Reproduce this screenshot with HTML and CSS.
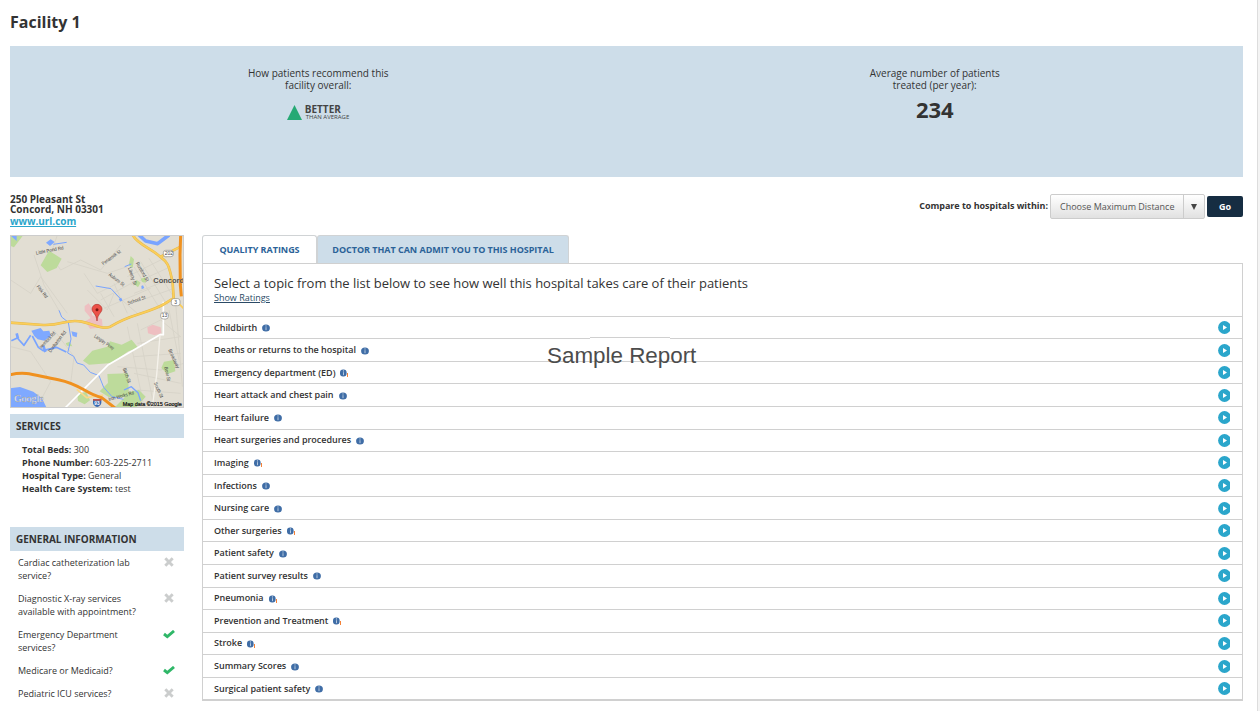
FILE: index.html
```
<!DOCTYPE html>
<html lang="en">
<head>
<meta charset="utf-8">
<title>Facility 1</title>
<link rel="stylesheet" href="styles.css">
</head>
<body>
<svg class="defs" width="0" height="0">
  <symbol id="info" viewBox="0 0 9 8"><ellipse cx="4" cy="4" rx="3.900" ry="3.600" fill="#3f6da6"/><path d="M4 3.200v3" stroke="#b5c8de" stroke-width="1"/><circle cx="4" cy="1.900" r=".6" fill="#c5d4e6"/></symbol>
  <symbol id="info-flag" viewBox="0 0 9 8"><rect x="0" y=".4" width="6.600" height="7.200" rx="3" fill="#3f6da6"/><path d="M3.500 3.200v3" stroke="#b5c8de" stroke-width="1"/><circle cx="3.500" cy="1.900" r=".6" fill="#c5d4e6"/><path d="M7.500 4v4" stroke="#f58238" stroke-width="1"/></symbol>
  <symbol id="go" viewBox="0 0 12 13"><circle cx="6.5" cy="6.5" r="6.4" fill="#2ba6cb"/><path d="M5 4v5l4-2.5z" fill="#fff"/></symbol>
  <symbol id="no" viewBox="0 0 10 10"><path d="M1.3 1.3l7.4 7.4M8.7 1.3L1.3 8.7" stroke="#cbcdcd" stroke-width="2.9"/></symbol>
  <symbol id="yes" viewBox="0 0 12 9"><path d="M1 4l3.300 2.600L11 1" stroke="#2fb768" stroke-width="2.900" fill="none"/></symbol>
</svg>
<div class="page">
  <h1 class="title">Facility 1</h1>
  <section class="summary">
    <div class="stat">
      <p class="stat-label">How patients recommend this<br>facility overall:</p>
      <div class="rating">
        <svg width="15" height="15" viewBox="0 0 15 15"><path d="M7.5 0L15 15H0z" fill="#26a974"/></svg>
        <div class="rating-text"><b class="better">BETTER</b><span class="than">THAN AVERAGE</span></div>
      </div>
    </div>
    <div class="stat">
      <p class="stat-label">Average number of patients<br>treated (per year):</p>
      <strong class="count">234</strong>
    </div>
  </section>
  <div class="contact">
    <address class="address">250 Pleasant St<br>Concord, NH 03301<br><a class="url" href="#">www.url.com</a></address>
    <div class="compare">
      <span class="compare-label">Compare to hospitals within:</span>
      <div class="select"><span class="select-text">Choose Maximum Distance</span><span class="select-arrow"><svg width="6" height="6" viewBox="0 0 6 6"><path d="M0 0h6L3 6z" fill="#444"/></svg></span></div>
      <button class="go-btn">Go</button>
    </div>
  </div>
  <div class="columns">
    <aside class="side">
      <svg class="map" width="174" height="173" viewBox="18 15 522 519">
        <rect x="18" y="15" width="522" height="519" fill="#e2ded3"/>
        <g stroke="#d6d2c8" stroke-width="2.500" fill="none">
          <path d="M160 15l-20 60 30 45 60-30 60 30 60-75M20 150l60 40 30-50 80 110M90 75l30 90 50 85M190 95l120 35 60-20M20 350l60 15 60 90-40 75M150 300l60 80-10 80M240 130l40 60 60-30M250 180l60 60 20-50 70 60"/>
          <path d="M390 110l80 130M410 95l80 130M435 85l70 110M370 140l120-60M380 165l120-55M390 190l115-45M400 215l110-40M290 210l110-60M300 235l140-60M330 260l-40-70M370 250l-40-90M410 300l60-30 60 50M400 340l130-20M390 380l140-10M340 410l130 10 70-20M370 290l50 240M400 280l50 250M495 240l30 150M515 220l20 250M390 430l140 30M400 480l130 10"/>
        </g>
        <g fill="#bddb9b">
          <path d="M18 15h40l-28 37-12-5zM135 62l38 24-15 28-28 12-20-20zM380 78l10 10-4 26-12-8zM410 146l14-4 2 16-12-2zM398 150l12 8-8 14-12-10zM265 362l45-12 8-16 35 10 30-15 20 25-30 10-50 35-68 5-18-12zM310 432l62-2 3 70-60 2-28-18 25-25zM480 395l30-5 4 34-24 8-18-18zM185 340l12-5 8 14-16-2zM375 485l30-5 20 20-30 34h-65l30-30zM220 495l26-10 12 26-16 12-20-10z"/>
        </g>
        <path d="M242 228l12-8 8 12 2 24 30 12 2 24-38 4-14-22 16-10-18-22zM430 292l16-8 24 8 2 18-20 6-20-6z" fill="#eebfc1"/>
        <path d="M82 302l28-8 8 10 18-2 5 16-20 14-20-4-10-10zM126 38l14-10 12 8-14 12zM18 475l30-4 40 14 26 20 14 29H18zM18 15h20v18zM202 304l18 4-2 14-12-4zM412 168l5-2 4 8-8 4z" fill="#7fa9ff"/>
        <g fill="none" stroke="#79a4ff" stroke-linejoin="round">
          <path d="M405 15l20 18 36 8 34-26" stroke-width="11"/>
          <path d="M22 332l18-8 20 22 20-30M85 318l18 34 14 10 40-10 30 14" stroke-width="5"/>
          <path d="M165 241l8 20 20 16 8 50-10 42 18 10 10 20 20 6 20 22 26 10 14 35 25 28 34 8M275 168l46 8 30 32M148 43l40-6M362 110l20-8" stroke-width="3"/>
          <path d="M38 310l4 16M118 348l6 18M348 205l4 8" stroke-width="8"/>
          <path d="M360 480l22-10 20 18 8 24" stroke-width="4"/>
        </g>
        <g fill="none" stroke-linejoin="round">
          <path d="M183 534l130-130 155-90h10V215" stroke="#fff" stroke-width="5"/>
          <path d="M468 315l-10 120-14 100" stroke="#f5f2eb" stroke-width="4"/>
          <path d="M218 478l30 25 50-8" stroke="#fbd98a" stroke-width="5"/>
          <path d="M18 278l100 7c60 2 70-20 115-10s60 24 86 15c60-36 80-32 135-55 30-12 35-20 55-30l-3-45c-12-66-20-66-38-80-25-25-65-35-82-65M470 80l60-30" stroke="#e5b94b" stroke-width="8"/>
          <path d="M18 278l100 7c60 2 70-20 115-10s60 24 86 15c60-36 80-32 135-55 30-12 35-20 55-30l-3-45c-12-66-20-66-38-80-25-25-65-35-82-65M470 80l60-30M509 205l31 32" stroke="#fbce5a" stroke-width="5"/>
          <path d="M18 434c55-12 80 5 145 15 70 14 80 42 130 54l40 31M530 15l-2 60 1 90 3 34" stroke="#f0911f" stroke-width="9"/>
        </g>
        <g fill="#fff" stroke="#8b8b88" stroke-width="2"><rect x="478" y="61" width="30" height="19" rx="7"/><rect x="502" y="206" width="26" height="21" rx="7"/><rect x="470" y="247" width="23" height="20" rx="8"/></g>
        <g class="map-road">
          <text x="482" y="76">202</text><text x="511" y="222">3</text><text x="473" y="262">13</text>
          <text transform="translate(97 74) rotate(-11)" textLength="84" lengthAdjust="spacingAndGlyphs">Little Pond Rd</text>
          <text transform="translate(298 106) rotate(-36)" textLength="66" lengthAdjust="spacingAndGlyphs">Penacook St</text>
          <text transform="translate(313 136) rotate(37)" textLength="55" lengthAdjust="spacingAndGlyphs">Auburn St</text>
          <text transform="translate(372 114) rotate(72)" textLength="55" lengthAdjust="spacingAndGlyphs">Liberty St</text>
          <text transform="translate(395 100) rotate(60)" textLength="64" lengthAdjust="spacingAndGlyphs">Rumford St</text>
          <text transform="translate(373 224) rotate(-19)" textLength="56" lengthAdjust="spacingAndGlyphs">School St</text>
          <text transform="translate(97 170) rotate(52)" textLength="45" lengthAdjust="spacingAndGlyphs">Fisk Rd</text>
          <text transform="translate(113 356) rotate(-47)" textLength="62" lengthAdjust="spacingAndGlyphs">Hemlock Rd</text>
          <text transform="translate(140 368) rotate(-52)" textLength="77" lengthAdjust="spacingAndGlyphs">Dunbarton Rd</text>
          <text transform="translate(269 321) rotate(34)" textLength="70" lengthAdjust="spacingAndGlyphs">Langley Pkwy</text>
          <text transform="translate(356 416) rotate(70)" textLength="46" lengthAdjust="spacingAndGlyphs">Birch St</text>
          <text transform="translate(315 513) rotate(-15)" textLength="78" lengthAdjust="spacingAndGlyphs">Iron Works Rd</text>
          <text transform="translate(493 360) rotate(66)" textLength="61" lengthAdjust="spacingAndGlyphs">Broadway</text>
          <text transform="translate(481 412) rotate(78)" textLength="43" lengthAdjust="spacingAndGlyphs">Bow St</text>
          <text transform="translate(449 459) rotate(66)" textLength="50" lengthAdjust="spacingAndGlyphs">South St</text>
        </g>
        <text class="map-city" x="448" y="160" textLength="92" lengthAdjust="spacingAndGlyphs">Concord</text>
        <path d="M267 507h25v12q-2 9-12.500 12-10.500-3-12.500-12z" fill="#3968b0"/><path d="M267 507h25v5h-25z" fill="#c95445"/>
        <text class="map-shield" x="271" y="524">93</text>
        <path d="M279 273c-2-22-15-25-15-36a15 14 0 0 1 30 0c0 11-13 14-15 36z" fill="#ec5148" stroke="#a92b25" stroke-width="1.800"/><circle cx="279" cy="239" r="4.500" fill="#7b1712"/>
        <text class="map-google" x="31" y="515" textLength="88" lengthAdjust="spacingAndGlyphs">Google</text>
        <text class="map-credit" x="356" y="527" textLength="177" lengthAdjust="spacingAndGlyphs">Map data ©2015 Google</text>
        <rect x="19.500" y="16.500" width="519" height="516" fill="none" stroke="#ccc" stroke-width="3"/>
      </svg>
      <h2 class="side-head">SERVICES</h2>
      <div class="services">
        <div><b>Total Beds:</b> 300</div>
        <div><b>Phone Number:</b> 603-225-2711</div>
        <div><b>Hospital Type:</b> General</div>
        <div><b>Health Care System:</b> test</div>
      </div>
      <h2 class="side-head">GENERAL INFORMATION</h2>
      <ul class="facts">
        <li class="fact"><span>Cardiac catheterization lab<br>service?</span><svg class="no"><use href="#no"/></svg></li>
        <li class="fact"><span>Diagnostic X-ray services<br>available with appointment?</span><svg class="no"><use href="#no"/></svg></li>
        <li class="fact"><span>Emergency Department<br>services?</span><svg class="yes"><use href="#yes"/></svg></li>
        <li class="fact"><span>Medicare or Medicaid?</span><svg class="yes"><use href="#yes"/></svg></li>
        <li class="fact"><span>Pediatric ICU services?</span><svg class="no"><use href="#no"/></svg></li>
      </ul>
    </aside>
    <main class="main">
      <nav class="tabs"><a class="tab tab-active">QUALITY RATINGS</a><a class="tab tab-idle">DOCTOR THAT CAN ADMIT YOU TO THIS HOSPITAL</a></nav>
      <section class="panel">
        <header class="intro">
          <p class="lead">Select a topic from the list below to see how well this hospital takes care of their patients</p>
          <a class="show" href="#">Show Ratings</a>
        </header>
        <div class="row"><span>Childbirth</span><svg class="info"><use href="#info"/></svg><svg class="go"><use href="#go"/></svg></div>
        <div class="row"><span>Deaths or returns to the hospital</span><svg class="info"><use href="#info"/></svg><svg class="go"><use href="#go"/></svg></div>
        <div class="row"><span>Emergency department (ED)</span><svg class="info"><use href="#info-flag"/></svg><svg class="go"><use href="#go"/></svg></div>
        <div class="row"><span>Heart attack and chest pain</span><svg class="info"><use href="#info"/></svg><svg class="go"><use href="#go"/></svg></div>
        <div class="row"><span>Heart failure</span><svg class="info"><use href="#info"/></svg><svg class="go"><use href="#go"/></svg></div>
        <div class="row"><span>Heart surgeries and procedures</span><svg class="info"><use href="#info"/></svg><svg class="go"><use href="#go"/></svg></div>
        <div class="row"><span>Imaging</span><svg class="info"><use href="#info-flag"/></svg><svg class="go"><use href="#go"/></svg></div>
        <div class="row"><span>Infections</span><svg class="info"><use href="#info"/></svg><svg class="go"><use href="#go"/></svg></div>
        <div class="row"><span>Nursing care</span><svg class="info"><use href="#info"/></svg><svg class="go"><use href="#go"/></svg></div>
        <div class="row"><span>Other surgeries</span><svg class="info"><use href="#info-flag"/></svg><svg class="go"><use href="#go"/></svg></div>
        <div class="row"><span>Patient safety</span><svg class="info"><use href="#info"/></svg><svg class="go"><use href="#go"/></svg></div>
        <div class="row"><span>Patient survey results</span><svg class="info"><use href="#info"/></svg><svg class="go"><use href="#go"/></svg></div>
        <div class="row"><span>Pneumonia</span><svg class="info"><use href="#info-flag"/></svg><svg class="go"><use href="#go"/></svg></div>
        <div class="row"><span>Prevention and Treatment</span><svg class="info"><use href="#info-flag"/></svg><svg class="go"><use href="#go"/></svg></div>
        <div class="row"><span>Stroke</span><svg class="info"><use href="#info-flag"/></svg><svg class="go"><use href="#go"/></svg></div>
        <div class="row"><span>Summary Scores</span><svg class="info"><use href="#info"/></svg><svg class="go"><use href="#go"/></svg></div>
        <div class="row"><span>Surgical patient safety</span><svg class="info"><use href="#info"/></svg><svg class="go"><use href="#go"/></svg></div>
        <div class="notch"></div>
        <div class="watermark">Sample Report</div>
      </section>
    </main>
  </div>
</div>
</body>
</html>
```
FILE: styles.css
```
* { box-sizing: border-box; }
body { margin: 0; height: 711px; overflow: hidden; background: #f4f4f4; color: #333; font-family: "Open Sans", "Liberation Sans", sans-serif; font-size: 9px; }
p, h1, h2, ul { margin: 0; padding: 0; }
.defs { position: absolute; }
.page { width: 1258px; height: 711px; padding: 0 14px 0 10px; background: #fff; border-right: 1px solid #ddd; overflow: hidden; }
.title { height: 46px; padding-top: 11px; font-size: 16px; line-height: 22px; font-weight: 700; }
.summary { display: grid; grid-template-columns: 1fr 1fr; height: 131px; background: #cddde9; }
.stat { display: flex; flex-direction: column; align-items: center; padding-top: 21px; }
.stat-label { font-size: 10px; line-height: 12px; text-align: center; }
.rating { display: flex; gap: 4px; padding-top: 14px; }
.rating-text { display: flex; flex-direction: column; width: 44px; white-space: nowrap; color: #444; }
.better { margin-left: -1px; font-size: 10px; line-height: 9px; }
.than { font-size: 6px; line-height: 7px; font-weight: 500; }
.count { padding-top: 7px; font-size: 22px; line-height: 22px; }
.contact { display: flex; justify-content: space-between; height: 58px; }
.address { padding-top: 17px; font-style: normal; font-weight: 700; font-size: 10px; line-height: 10px; }
.url { display: inline-block; padding-top: 2px; color: #2ba6cb; letter-spacing: -.05px; }
.compare { display: flex; align-items: flex-start; padding-top: 17px; }
.compare-label { margin-right: 2px; font-weight: 700; line-height: 24px; letter-spacing: -.03px; }
.select { display: flex; width: 155px; height: 25px; border: 1px solid #ccc; border-radius: 2px; background: linear-gradient(#fff, #e1e1e1); color: #555; }
.select-text { width: 132px; padding-left: 9px; font-size: 9px; line-height: 24px; white-space: nowrap; }
.select-arrow { display: flex; flex: 1; align-items: center; justify-content: center; padding-right: 1px; border-left: 1px solid #ccc; }
.go-btn { width: 36px; height: 21px; margin: 2px 0 0 2px; padding: 0; border: 0; border-radius: 2px; background: #162d42; color: #fff; font: 700 9px/21px "Open Sans", sans-serif; }
.columns { display: flex; gap: 18px; }
.side { width: 174px; }
.map { display: block; margin-bottom: 6px; }
.map-road { font: 15px "Liberation Sans", sans-serif; fill: #444; }
.map-city { font: 700 19px "Liberation Sans", sans-serif; fill: #555; }
.map-shield { font: 700 14px "Liberation Sans", sans-serif; fill: #fff; }
.map-google { font: 30px "Liberation Serif", serif; fill: #fff; stroke: #999; stroke-width: .8; }
.map-credit { font: 15px "Liberation Sans", sans-serif; fill: #111; stroke: #111; stroke-width: .6; }
.side-head { height: 24px; padding-left: 6px; background: #cddde9; font-size: 10px; line-height: 24px; letter-spacing: -.04px; }
.services { height: 89px; padding: 5px 12px; line-height: 13px; }
.facts { padding: 5px 8px; list-style: none; }
.fact { display: flex; justify-content: space-between; margin-bottom: 10px; line-height: 13px; }
.no { width: 10px; height: 10px; margin: 1px 2px 0 0; }
.yes { width: 12px; height: 9px; margin: 2px 1px 0 0; }
.main { width: 1041px; }
.tabs { display: flex; height: 28px; }
.tab { height: 28px; border: 1px solid #d0d3d5; border-bottom: 0; border-radius: 3px 3px 0 0; color: #2b6298; font-size: 9px; font-weight: 700; line-height: 27px; text-align: center; white-space: nowrap; letter-spacing: -.03px; }
.tab-active { width: 115px; }
.tab-idle { width: 252px; background: #cddde9; }
.panel { position: relative; height: 438px; border: 1px solid #d0d0d0; border-bottom-width: 2px; }
.intro { height: 51.8px; padding: 10px 11px; }
.lead { font-size: 13px; line-height: 18px; letter-spacing: -.014px; }
.show { display: block; color: #2b4a66; line-height: 12px; }
.row { display: flex; align-items: center; height: 22.5625px; padding: 0 12px 0 11px; border-top: 1px solid #d0d0d0; font-weight: 600; line-height: 20px; letter-spacing: -.02px; }
.info { width: 9px; height: 8px; margin: 1px 0 0 5px; }
.go { width: 12px; height: 13px; margin-left: auto; }
.notch { position: absolute; left: 387px; top: 73px; width: 80px; height: 2px; border-top: 1px solid #d0d0d0; background: #fff; }
.watermark { position: absolute; left: 344px; top: 78px; color: #4c4c4c; font: 22.4px/27px "Liberation Sans", sans-serif; white-space: nowrap; }
```
